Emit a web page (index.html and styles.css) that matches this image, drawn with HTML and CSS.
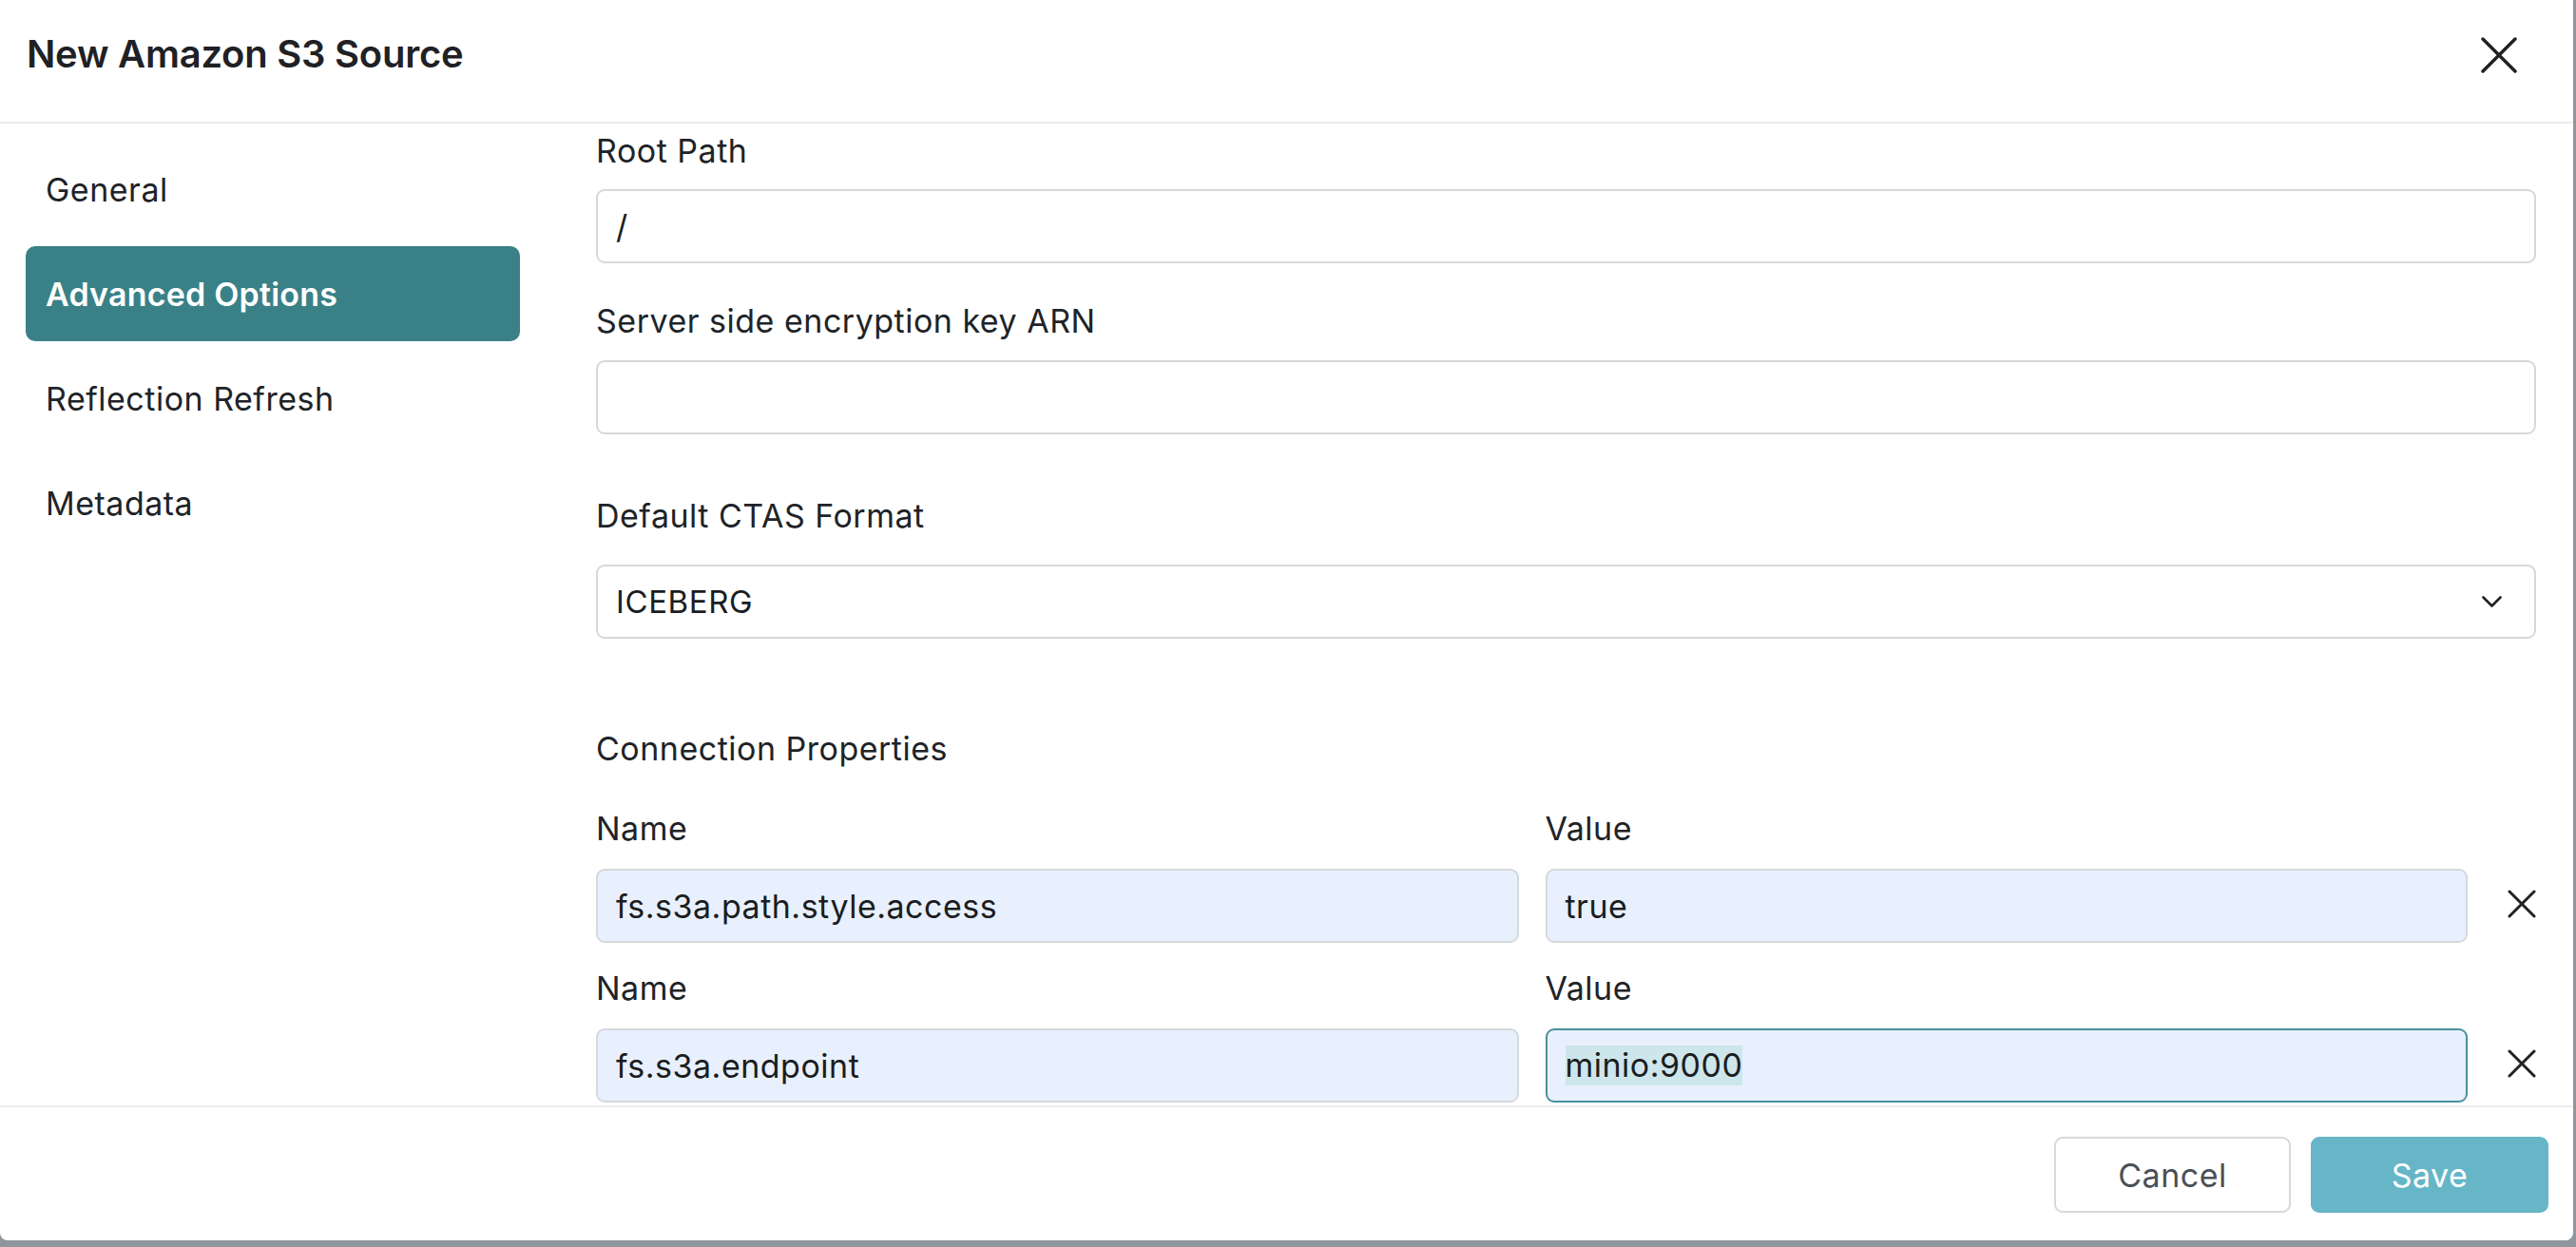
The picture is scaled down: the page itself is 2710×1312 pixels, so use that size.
FILE: index.html
```html
<!DOCTYPE html>
<html lang="en">
<head>
<meta charset="utf-8">
<title>New Amazon S3 Source</title>
<link rel="stylesheet" href="styles.css">
</head>
<body>
<div class="modal">
  <header class="modal-header">
    <h1 class="modal-title">New Amazon S3 Source</h1>
    <button class="close-btn" aria-label="Close">
      <svg width="38" height="38" viewBox="0 0 38 38"><path d="M2 2 L36 36 M36 2 L2 36" stroke="#202124" stroke-width="3.5" stroke-linecap="round" fill="none"/></svg>
    </button>
  </header>
  <div class="modal-main">
    <nav class="side-nav">
      <div class="nav-item">General</div>
      <div class="nav-item active">Advanced Options</div>
      <div class="nav-item">Reflection Refresh</div>
      <div class="nav-item">Metadata</div>
    </nav>
    <div class="content">
      <div class="field">
        <div class="label">Root Path</div>
        <div class="input">/</div>
      </div>
      <div class="field field-2">
        <div class="label label-tight">Server side encryption key ARN</div>
        <div class="input"></div>
      </div>
      <div class="field field-3">
        <div class="label label-wide">Default CTAS Format</div>
        <div class="input select">
          <span class="select-value">ICEBERG</span>
          <svg class="chevron" width="21" height="12" viewBox="0 0 21 12"><polyline points="1.5,1.5 10.5,10.5 19.5,1.5" stroke="#202124" stroke-width="2.6" fill="none" stroke-linecap="round" stroke-linejoin="round"/></svg>
        </div>
      </div>
      <div class="section-title">Connection Properties</div>
      <div class="prop-row prop-row-1">
        <div class="prop-field">
          <div class="label label-prop">Name</div>
          <div class="input autofill">fs.s3a.path.style.access</div>
        </div>
        <div class="prop-field prop-value">
          <div class="label label-prop">Value</div>
          <div class="input autofill">true</div>
        </div>
        <button class="remove-btn" aria-label="Remove">
          <svg width="30" height="30" viewBox="0 0 30 30"><path d="M2 2 L28 28 M28 2 L2 28" stroke="#202124" stroke-width="3" stroke-linecap="round" fill="none"/></svg>
        </button>
      </div>
      <div class="prop-row prop-row-2">
        <div class="prop-field">
          <div class="label label-prop">Name</div>
          <div class="input autofill">fs.s3a.endpoint</div>
        </div>
        <div class="prop-field prop-value">
          <div class="label label-prop">Value</div>
          <div class="input autofill focused"><span class="selected">minio:9000</span></div>
        </div>
        <button class="remove-btn" aria-label="Remove">
          <svg width="30" height="30" viewBox="0 0 30 30"><path d="M2 2 L28 28 M28 2 L2 28" stroke="#202124" stroke-width="3" stroke-linecap="round" fill="none"/></svg>
        </button>
      </div>
    </div>
  </div>
  <footer class="modal-footer">
    <button class="btn btn-cancel">Cancel</button>
    <button class="btn btn-save">Save</button>
  </footer>
</div>
</body>
</html>
```

FILE: styles.css
```css
* { box-sizing: border-box; }

html, body {
  margin: 0;
  padding: 0;
}

body {
  width: 2710px;
  height: 1312px;
  overflow: hidden;
  background: #8f969d;
  font-family: Inter, "Noto Sans", "Liberation Sans", sans-serif;
  color: #202327;
}

.modal {
  width: 2707px;
  height: 1305px;
  background: #ffffff;
  border-bottom-right-radius: 8px;
  border-bottom-left-radius: 8px;
  display: flex;
  flex-direction: column;
  overflow: hidden;
}

.modal-header {
  height: 130px;
  flex-shrink: 0;
  border-bottom: 2px solid #ececec;
  display: flex;
  align-items: flex-start;
  justify-content: space-between;
  padding: 33px 59px 0 28px;
}

.modal-title {
  margin: 0;
  font-size: 40px;
  line-height: 48px;
  font-weight: 600;
  letter-spacing: -0.25px;
  color: #1f2125;
}

.close-btn {
  margin-top: 6px;
  width: 38px;
  height: 38px;
  padding: 0;
  border: 0;
  background: transparent;
  display: flex;
}

.modal-main {
  flex: 1;
  min-height: 0;
  display: flex;
  overflow: hidden;
}

.side-nav {
  width: 547px;
  flex-shrink: 0;
  padding: 19px 0 0 27px;
}

.nav-item {
  height: 100px;
  margin-bottom: 10px;
  padding-left: 21px;
  display: flex;
  align-items: center;
  font-size: 34px;
  letter-spacing: 0.5px;
  color: #202327;
  border-radius: 10px;
}

.nav-item.active {
  background: #3a8187;
  color: #ffffff;
  font-weight: 600;
  letter-spacing: 0.2px;
}

.content {
  flex: 1;
  min-width: 0;
  padding: 6px 39px 0 80px;
}

.label {
  font-size: 34px;
  letter-spacing: 0.5px;
  line-height: 46px;
  color: #202327;
  margin-bottom: 17px;
}

.label-tight { margin-bottom: 18px; }
.label-wide { margin-bottom: 28px; }
.label-prop { margin-bottom: 19px; }

.field-2 { margin-top: 38px; }
.field-3 { margin-top: 63px; }

.input {
  height: 78px;
  border: 2px solid #d5d8dc;
  border-radius: 9px;
  background: #ffffff;
  padding: 0 19px;
  display: flex;
  align-items: center;
  font-size: 34px;
  letter-spacing: 0.5px;
  color: #1b1d20;
  white-space: nowrap;
  overflow: hidden;
}

.select {
  justify-content: space-between;
  padding-right: 34px;
}

.select-value {
  font-size: 33px;
  letter-spacing: 0.6px;
}

.section-title {
  margin-top: 93px;
  font-size: 34px;
  letter-spacing: 0.5px;
  line-height: 46px;
  color: #202327;
}

.prop-row {
  display: flex;
  align-items: flex-end;
}

.prop-row-1 { margin-top: 38px; }
.prop-row-2 { margin-top: 25px; }

.prop-field {
  flex: 1;
  min-width: 0;
}

.prop-value { margin-left: 28px; }

.input.autofill {
  background: #e8f0fe;
}

.input.focused {
  border-color: #4b909c;
}

.selected {
  background: #cde6ec;
  line-height: 42px;
  display: inline-block;
}

.remove-btn {
  width: 30px;
  height: 78px;
  margin-left: 42px;
  margin-bottom: 2px;
  padding: 0;
  border: 0;
  background: transparent;
  display: flex;
  align-items: center;
  justify-content: center;
}

.modal-footer {
  height: 142px;
  flex-shrink: 0;
  border-top: 2px solid #ececec;
  display: flex;
  justify-content: flex-end;
  align-items: flex-start;
  padding: 31px 26px 0 0;
  gap: 21px;
}

.btn {
  height: 80px;
  border-radius: 9px;
  font-family: Inter, "Noto Sans", sans-serif;
  font-size: 34px;
  letter-spacing: 0.5px;
  padding: 0;
  cursor: pointer;
}

.btn-cancel {
  width: 249px;
  background: #ffffff;
  border: 2px solid #d6d9dd;
  color: #4a4f57;
}

.btn-save {
  width: 250px;
  background: #66b6c7;
  border: 0;
  color: #ffffff;
}
```
